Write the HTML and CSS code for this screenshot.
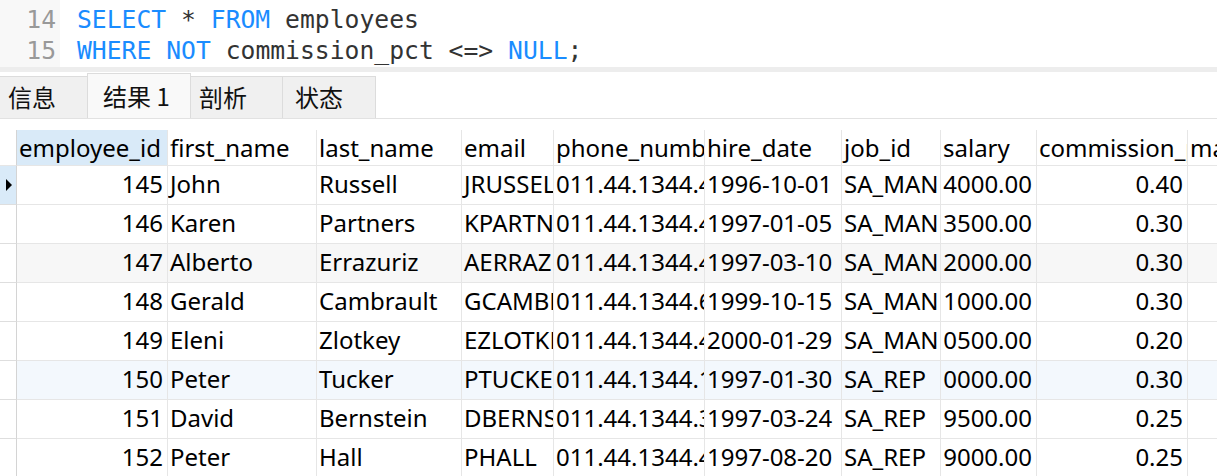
FILE: index.html
```html
<!DOCTYPE html>
<html lang="zh">
<head>
<meta charset="utf-8">
<title>Query result</title>
<link rel="stylesheet" href="styles.css">
</head>
<body>
<div class="editor">
  <div class="gutter">
    <div class="ln">14</div>
    <div class="ln">15</div>
  </div>
  <div class="code">
    <div class="line"><span class="kw">SELECT</span> * <span class="kw">FROM</span> employees</div>
    <div class="line"><span class="kw">WHERE</span> <span class="kw">NOT</span> commission_pct &lt;=&gt; <span class="kw">NULL</span>;</div>
  </div>
</div>
<div class="sep"></div>
<div class="tabs">
  <div class="tab tab-info">信息</div>
  <div class="tab tab-result active">结果 1</div>
  <div class="tab tab-profile">剖析</div>
  <div class="tab tab-status">状态</div>
</div>
<div class="grid">
  <div class="row head">
    <div class="c ind"></div>
    <div class="c sel">employee_id</div>
    <div class="c">first_name</div>
    <div class="c">last_name</div>
    <div class="c">email</div>
    <div class="c">phone_number</div>
    <div class="c">hire_date</div>
    <div class="c">job_id</div>
    <div class="c">salary</div>
    <div class="c">commission_pct</div>
    <div class="c">manager_id</div>
  </div>
  <div class="row">
    <div class="c ind cur"><span class="arrow"></span></div>
    <div class="c num">145</div><div class="c">John</div><div class="c">Russell</div><div class="c">JRUSSEL</div><div class="c">011.44.1344.429268</div><div class="c">1996-10-01</div><div class="c">SA_MAN</div><div class="c num">14000.00</div><div class="c num">0.40</div><div class="c"></div>
  </div>
  <div class="row">
    <div class="c ind"></div>
    <div class="c num">146</div><div class="c">Karen</div><div class="c">Partners</div><div class="c">KPARTNER</div><div class="c">011.44.1344.467268</div><div class="c">1997-01-05</div><div class="c">SA_MAN</div><div class="c num">13500.00</div><div class="c num">0.30</div><div class="c"></div>
  </div>
  <div class="row alt">
    <div class="c ind"></div>
    <div class="c num">147</div><div class="c">Alberto</div><div class="c">Errazuriz</div><div class="c">AERRAZUR</div><div class="c">011.44.1344.429278</div><div class="c">1997-03-10</div><div class="c">SA_MAN</div><div class="c num">12000.00</div><div class="c num">0.30</div><div class="c"></div>
  </div>
  <div class="row">
    <div class="c ind"></div>
    <div class="c num">148</div><div class="c">Gerald</div><div class="c">Cambrault</div><div class="c">GCAMBRAU</div><div class="c">011.44.1344.619268</div><div class="c">1999-10-15</div><div class="c">SA_MAN</div><div class="c num">11000.00</div><div class="c num">0.30</div><div class="c"></div>
  </div>
  <div class="row">
    <div class="c ind"></div>
    <div class="c num">149</div><div class="c">Eleni</div><div class="c">Zlotkey</div><div class="c">EZLOTKEY</div><div class="c">011.44.1344.429018</div><div class="c">2000-01-29</div><div class="c">SA_MAN</div><div class="c num">10500.00</div><div class="c num">0.20</div><div class="c"></div>
  </div>
  <div class="row hover">
    <div class="c ind"></div>
    <div class="c num">150</div><div class="c">Peter</div><div class="c">Tucker</div><div class="c">PTUCKER</div><div class="c">011.44.1344.129268</div><div class="c">1997-01-30</div><div class="c">SA_REP</div><div class="c num">10000.00</div><div class="c num">0.30</div><div class="c"></div>
  </div>
  <div class="row">
    <div class="c ind"></div>
    <div class="c num">151</div><div class="c">David</div><div class="c">Bernstein</div><div class="c">DBERNSTE</div><div class="c">011.44.1344.345268</div><div class="c">1997-03-24</div><div class="c">SA_REP</div><div class="c num">9500.00</div><div class="c num">0.25</div><div class="c"></div>
  </div>
  <div class="row">
    <div class="c ind"></div>
    <div class="c num">152</div><div class="c">Peter</div><div class="c">Hall</div><div class="c">PHALL</div><div class="c">011.44.1344.478968</div><div class="c">1997-08-20</div><div class="c">SA_REP</div><div class="c num">9000.00</div><div class="c num">0.25</div><div class="c"></div>
  </div>
</div>
</body>
</html>
```
FILE: styles.css
```css
html, body {
  margin: 0;
  padding: 0;
}
body {
  width: 1217px;
  height: 476px;
  overflow: hidden;
  background: #ffffff;
  font-family: "Noto Sans", "Noto Sans CJK SC", sans-serif;
  color: #000;
}

/* SQL editor */
.editor {
  display: flex;
  height: 67px;
  box-sizing: border-box;
  padding: 0;
  font-family: "DejaVu Sans Mono", "Liberation Mono", monospace;
  font-size: 24.7px;
  line-height: 31px;
}
.gutter {
  width: 60px;
  box-sizing: border-box;
  padding: 4px 4px 0 0;
  background: #f8f8f8;
  color: #999999;
  text-align: right;
}
.code {
  padding: 4px 0 0 17px;
  color: #333333;
  white-space: nowrap;
}
.kw {
  color: #1a8cff;
}
.sep {
  height: 5px;
  background: #ededed;
}

/* result tabs */
.tabs {
  display: flex;
  align-items: flex-end;
  height: 46px;
  border-bottom: 1px solid #e2e2e2;
  font-family: "Noto Sans CJK SC", "Noto Sans", sans-serif;
  font-size: 24px;
}
.tab {
  box-sizing: border-box;
  height: 42px;
  line-height: 40px;
  padding-left: 8px;
  background: #f0f0f0;
  border: 1px solid #dcdcdc;
  border-bottom: none;
  margin-right: -1px;
  color: #111;
  white-space: nowrap;
}
.tab-info {
  width: 88px;
  border-left: none;
}
.tab-result {
  width: 104px;
  padding-left: 15px;
}
.tab-profile {
  width: 93px;
}
.tab-status {
  width: 94px;
  padding-left: 12px;
}
.tab.active {
  height: 45px;
  line-height: 44px;
  background: #f9f9f9;
  position: relative;
  z-index: 1;
}

/* data grid */
.grid {
  margin-top: 11px;
  width: 1400px;
  font-size: 24px;
}
.row {
  display: grid;
  grid-template-columns: 17px 151px 149px 145px 92px 151px 137px 99px 96px 151px 150px;
  height: 39px;
}
.row.head {
  height: 36px;
}
.c {
  box-sizing: border-box;
  border-right: 1px solid #e6e6e6;
  border-bottom: 1px solid #e6e6e6;
  padding: 0 3px 0 2px;
  overflow: hidden;
  white-space: nowrap;
  line-height: 36px;
}
.head .c {
  line-height: 35px;
}
.num {
  display: flex;
  justify-content: flex-end;
  padding-right: 4px;
}
.c.ind {
  border-right: 1px solid #d4d4d4;
  border-bottom-color: #dedede;
  padding: 0;
  display: flex;
  align-items: center;
  justify-content: center;
}
.head .c.ind {
  border-bottom-color: #e6e6e6;
}
.c.sel {
  background: #d9eaf8;
}
.c.cur {
  background: #d9eaf8;
}
.arrow {
  width: 0;
  height: 0;
  border-left: 6px solid #000;
  border-top: 6px solid transparent;
  border-bottom: 6px solid transparent;
  margin-left: 1px;
}
.row.alt .c:not(.ind) {
  background: #f7f7f7;
}
.row.hover .c:not(.ind) {
  background: #f3f8fd;
}
```
